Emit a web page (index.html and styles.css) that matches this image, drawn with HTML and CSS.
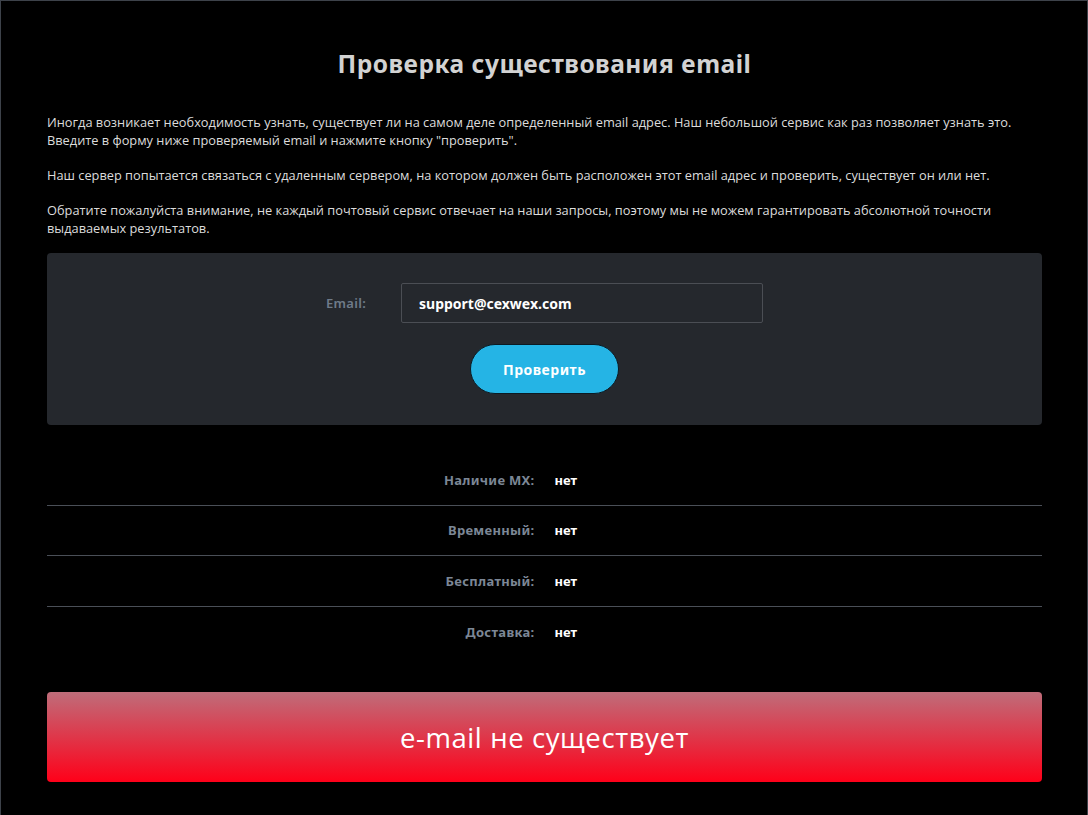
FILE: index.html
```html
<!DOCTYPE html>
<html lang="ru">
<head>
<meta charset="utf-8">
<title>Проверка существования email</title>
<link rel="stylesheet" href="styles.css">
</head>
<body>
<div class="page">
  <h1 class="title">Проверка существования email</h1>
  <div class="intro">
    <p>Иногда возникает необходимость узнать, существует ли на самом деле определенный email адрес. Наш небольшой сервис как раз позволяет узнать это.<br>Введите в форму ниже проверяемый email и нажмите кнопку "проверить".</p>
    <p>Наш сервер попытается связаться с удаленным сервером, на котором должен быть расположен этот email адрес и проверить, существует он или нет.</p>
    <p>Обратите пожалуйста внимание, не каждый почтовый сервис отвечает на наши запросы, поэтому мы не можем гарантировать абсолютной точности выдаваемых результатов.</p>
  </div>
  <form class="panel">
    <div class="field">
      <label class="field-label" for="email">Email:</label>
      <input class="field-input" id="email" type="text" value="support@cexwex.com">
    </div>
    <button class="btn" type="button">Проверить</button>
  </form>
  <div class="results">
    <div class="row"><div class="key">Наличие MX:</div><div class="val">нет</div></div>
    <div class="row"><div class="key">Временный:</div><div class="val">нет</div></div>
    <div class="row"><div class="key">Бесплатный:</div><div class="val">нет</div></div>
    <div class="row"><div class="key">Доставка:</div><div class="val">нет</div></div>
  </div>
  <div class="verdict">e-mail не существует</div>
</div>
</body>
</html>
```
FILE: styles.css
```css
html, body {
  margin: 0;
  padding: 0;
  background: #000;
}
body {
  font-family: "Open Sans", "Noto Sans", sans-serif;
  color: #d6d6d6;
}
.page {
  min-height: 815px;
  box-sizing: border-box;
  border: 1px solid #3d424a;
  border-bottom: none;
  padding: 47px 45px 0 46px;
}
.title {
  margin: 0;
  text-align: center;
  font-family: "Noto Sans", sans-serif;
  font-weight: 700;
  font-size: 24.5px;
  letter-spacing: 0.5px;
  line-height: 32px;
  color: #d2d2d2;
}
.intro {
  margin-top: 33px;
  font-size: 12.8px;
  line-height: 18px;
  color: #dcdcdc;
}
.intro p {
  margin: 0 0 17px;
}
.intro p:last-child {
  margin-bottom: 16px;
}
.panel {
  margin: 0;
  background: #25282d;
  border-radius: 4px;
  padding: 30px 0 31px;
  display: flex;
  flex-direction: column;
  align-items: center;
  gap: 21px;
}
.field {
  display: flex;
  align-items: center;
}
.field-label {
  width: 75px;
  font-family: "Noto Sans", sans-serif;
  font-weight: 600;
  font-size: 13px;
  letter-spacing: 0.3px;
  color: #6f7b89;
}
.field-input {
  width: 362px;
  height: 40px;
  box-sizing: border-box;
  border: 1px solid #4b4e54;
  border-radius: 2px;
  background: #25282d;
  color: #fff;
  padding: 0 17px;
  font-family: "Noto Sans", sans-serif;
  font-weight: 700;
  font-size: 14px;
  outline: none;
}
.btn {
  width: 149px;
  height: 50px;
  border: 1px solid #0c1a22;
  border-radius: 25px;
  background: #25b4e5;
  color: #fff;
  font-family: "Noto Sans", sans-serif;
  font-weight: 700;
  font-size: 14px;
  letter-spacing: 0.5px;
  cursor: pointer;
}
.results {
  margin-top: 30px;
}
.row {
  display: grid;
  grid-template-columns: 1fr 1fr;
  box-sizing: border-box;
  height: 50.5px;
  align-items: center;
  border-bottom: 1px solid #4a4f57;
  font-family: "Noto Sans", sans-serif;
  font-weight: 700;
  font-size: 13px;
}
.row:last-child {
  border-bottom: none;
}
.key {
  text-align: right;
  padding-right: 10px;
  color: #7c8796;
  letter-spacing: 0.3px;
}
.val {
  padding-left: 10px;
  color: #fff;
}
.verdict {
  margin-top: 35px;
  height: 90px;
  border-radius: 4px;
  background: linear-gradient(to bottom, #bf6d7a, #ff0019);
  display: flex;
  align-items: center;
  justify-content: center;
  font-family: "Open Sans", sans-serif;
  font-weight: 500;
  font-size: 27.5px;
  letter-spacing: 0.6px;
  color: #fff;
}
```
